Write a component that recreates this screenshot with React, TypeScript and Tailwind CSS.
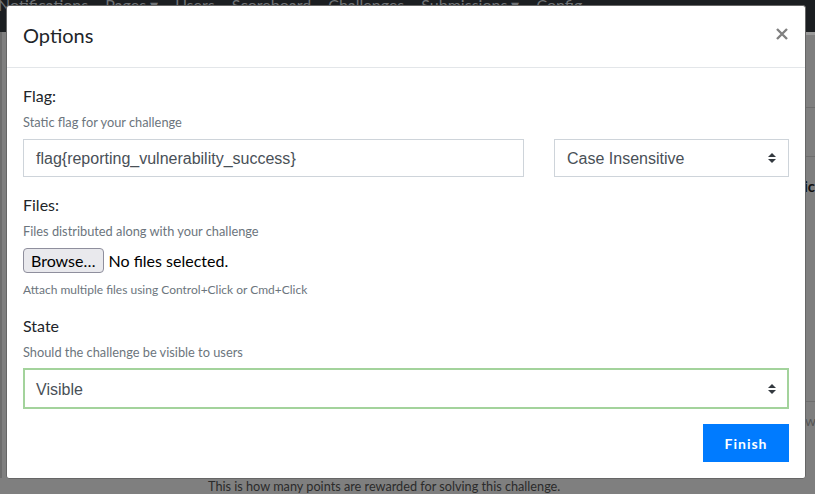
import React from "react";

const lato = { fontFamily: "Lato, 'Noto Sans', sans-serif" };

function SelectArrows() {
  return (
    <svg width="8" height="10" viewBox="0 0 4 5" className="shrink-0">
      <path d="M2 0L0 2h4zm0 5L0 3h4z" fill="#343a40" />
    </svg>
  );
}

export default function App() {
  return (
    <div className="relative w-[815px] h-[494px] overflow-hidden bg-[#7f7f7f] font-['Lato',sans-serif]">
      {/* background page (dimmed) */}
      <div className="flex flex-col h-full">
        <div className="h-[32px] bg-[#1b1e21] overflow-hidden">
          <div className="flex gap-[17px] -mt-[7px] -ml-[2px] text-[16px] leading-[24px] text-[#6f7275] whitespace-nowrap">
            <span>Notifications</span>
            <span>Pages ▾</span>
            <span>Users</span>
            <span>Scoreboard</span>
            <span>Challenges</span>
            <span>Submissions ▾</span>
            <span>Config</span>
          </div>
        </div>
        <div className="flex flex-1">
          <div className="w-[806px] shrink-0 flex flex-col">
            <div className="flex-1 flex">
              <div className="w-[2px] bg-[#6c6c6c]" />
            </div>
            <div className="h-[16px] pl-[208px] text-[12.7px] leading-[16px] text-[#2b2b2b] whitespace-nowrap">
              This is how many points are rewarded for solving this challenge.
            </div>
          </div>
          <div className="flex-1 flex flex-col">
            <div className="h-[3px] bg-[#999]" />
            <div className="h-[72px]" />
            <div className="h-[1px] bg-[#6e6e6e]" />
            <div className="h-[48px]" />
            <div className="h-[1px] bg-[#6e6e6e]" />
            <div className="h-[20px]" />
            <div className="text-[15px] leading-[18px] font-bold text-[#111] -ml-[2px] whitespace-nowrap">ic</div>
            <div className="h-[206px]" />
            <div className="h-[1px] bg-[#6e6e6e]" />
            <div className="h-[10px]" />
            <div className="text-[14px] leading-[18px] text-[#555] -ml-[1px] whitespace-nowrap">wo</div>
          </div>
        </div>
      </div>

      {/* modal */}
      <div
        className="absolute left-[6px] top-[5px] w-[800px] h-[474px] bg-white border border-[#666] rounded-[3px] flex flex-col text-[#212529]"
        style={lato}
      >
        <div className="h-[62px] border-b border-[#e3e6e9] px-[16px] pt-[14px] flex items-start">
          <div className="text-[20px] leading-[30px] text-[#212529]">Options</div>
          <svg width="12" height="12" viewBox="0 0 12 12" className="ml-auto mt-[8px] mr-[1px]">
            <path d="M1 1L11 11M11 1L1 11" stroke="#808080" strokeWidth="2.4" strokeLinecap="butt" />
          </svg>
        </div>

        <div className="px-[16px] pt-[16px] flex flex-col">
          <div className="text-[16px] leading-[24px]">Flag:</div>
          <div className="mt-[4px] text-[12.8px] leading-[20px] text-[#6c757d]">Static flag for your challenge</div>
          <div className="mt-[7px] grid grid-cols-[501px_235px] gap-[30px]">
            <div
              className="h-[38px] border border-[#ced4da] px-[12px] pt-[2px] flex items-center text-[16px] text-[#495057]"
              style={{ fontFamily: "'Liberation Sans', Arial, sans-serif" }}
            >
              flag{"{"}reporting_vulnerability_success{"}"}
            </div>
            <div
              className="h-[38px] border border-[#ced4da] pl-[12px] pr-[12px] pt-[2px] flex items-center text-[16px] text-[#495057]"
              style={{ fontFamily: "'Liberation Sans', Arial, sans-serif" }}
            >
              <span>Case Insensitive</span>
              <span className="ml-auto -mt-[2px]"><SelectArrows /></span>
            </div>
          </div>

          <div className="mt-[16px] text-[16px] leading-[24px]">Files:</div>
          <div className="mt-[4px] text-[12.8px] leading-[20px] text-[#6c757d]">Files distributed along with your challenge</div>
          <div className="mt-[7px] flex items-center">
            <div className="h-[25px] px-[7px] flex items-center bg-[#e9e9ed] border border-[#8f8f9d] rounded-[4px] text-[16px] text-[#000]">
              Browse…
            </div>
            <span className="ml-[5px] text-[16px] text-[#000]">No files selected.</span>
          </div>
          <div className="mt-[7px] text-[12px] leading-[20px] text-[#6c757d]">Attach multiple files using Control+Click or Cmd+Click</div>

          <div className="mt-[14px] text-[16px] leading-[24px]">State</div>
          <div className="mt-[4px] text-[12.8px] leading-[20px] text-[#6c757d]">Should the challenge be visible to users</div>
          <div
            className="mt-[6px] h-[41px] border-2 border-[#a3d39c] pl-[11px] pr-[11px] pt-[2px] flex items-center text-[16px] text-[#495057]"
            style={{ fontFamily: "'Liberation Sans', Arial, sans-serif" }}
          >
            <span>Visible</span>
            <span className="ml-auto -mt-[2px]"><SelectArrows /></span>
          </div>

          <div className="mt-[15px] flex justify-end">
            <div className="w-[86px] h-[38px] bg-[#007bff] text-white font-bold text-[14px] tracking-[1px] flex items-center justify-center">
              Finish
            </div>
          </div>
        </div>
      </div>
    </div>
  );
}
